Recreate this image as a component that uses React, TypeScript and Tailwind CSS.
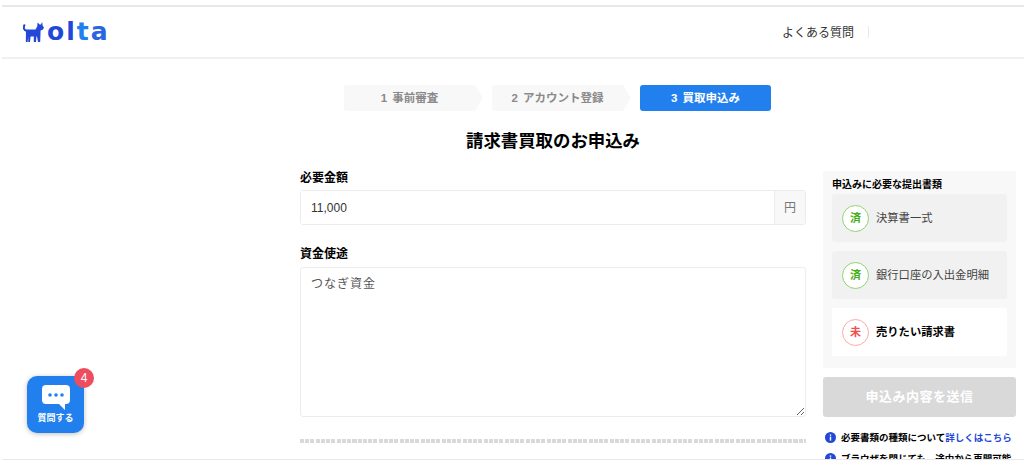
import React from "react";

const FONT = "font-['Liberation_Sans','Noto_Sans_CJK_JP',sans-serif]";
const ARROW =
  "[clip-path:polygon(0_0,calc(100%-8px)_0,100%_50%,calc(100%-8px)_100%,0_100%)]";

const Logo = () => (
  <div className="flex items-end">
    <svg width="21" height="20" viewBox="0 0 21 20" className="block" fill="#2347d6">
      <path d="M1.8 2.5C-.2 5.6 1.2 8.8 4 9" fill="none" stroke="#2347d6" strokeWidth="2" />
      <path d="M3 7.5H12.5L14.2 4.5 14.6 0.5 16.6 2.6H17.8L19.2 0 19.6 3.6 21 5.8 19.6 7.8 17.6 8.6 17.2 20H15L14 14.6H13.4L13 20H10.8V14.4H7.6L7 20H5.2V15L4.6 20H2.8Z" />
    </svg>
    <span className="ml-[3px] font-['DejaVu_Sans',sans-serif] text-[25px] leading-[20px] font-bold tracking-[2px]">
      <span className="text-[#2347d6]">ol</span>
      <span className="text-[#2180ee]">t</span>
      <span className="text-[#2a66e3]">a</span>
    </span>
  </div>
);

const Step = ({ num, label, active }: { num: string; label: string; active?: boolean }) => (
  <div
    className={
      active
        ? "flex h-[26px] w-[131px] items-center justify-center gap-[5px] rounded-[3px] bg-[#2180ee] pt-[1px] text-[11.5px] font-bold text-white"
        : `flex h-[26px] w-[139px] items-center justify-center gap-[5px] rounded-l-[3px] bg-[#f8f8f8] pr-2 pt-[1px] text-[11.5px] font-bold text-[#8a8a8a] ${ARROW}`
    }
  >
    <span>{num}</span>
    <span>{label}</span>
  </div>
);

const DocCard = ({ label, done }: { label: string; done: boolean }) => (
  <div
    className={`flex h-[48px] items-center rounded-[3px] pl-[10px] pt-[1px] ${done ? "bg-[#f1f1f1]" : "bg-white"}`}
  >
    <span
      className={`flex h-[27px] w-[27px] items-center justify-center rounded-full border bg-white text-[11px] font-bold ${
        done ? "border-[#8fd46f] text-[#3fae12]" : "border-[#ffa8a8] text-[#f44d4d]"
      }`}
    >
      {done ? "済" : "未"}
    </span>
    <span className={`ml-[7px] text-[11.3px] ${done ? "text-[#444444]" : "font-bold text-black"}`}>{label}</span>
  </div>
);

const InfoIcon = () => (
  <svg width="11" height="11" viewBox="0 0 11 11" className="shrink-0">
    <circle cx="5.5" cy="5.5" r="5.5" fill="#2347d6" />
    <rect x="4.8" y="4.6" width="1.4" height="4" fill="#fff" />
    <rect x="4.8" y="2.4" width="1.4" height="1.4" fill="#fff" />
  </svg>
);

export default function App() {
  return (
    <div className={`relative h-[463px] w-[1024px] overflow-hidden bg-white pt-[5px] text-black ${FONT}`}>
      <div className="ml-[2px] h-[2px] bg-[#e8e8e8]" />
      <header className="ml-[2px] flex h-[52px] items-center justify-between border-b-2 border-[#f0f0f0] pl-[21px] pr-[155px]">
        <Logo />
        <div className="flex h-[12px] items-center border-r border-[#e8e8e8] pr-[14px]">
          <span className="pt-[1px] text-[12px] text-[#333333]">よくある質問</span>
        </div>
      </header>

      <div className="flex gap-[9px] pl-[344px] pt-[26px]">
        <Step num="1" label="事前審査" />
        <Step num="2" label="アカウント登録" />
        <Step num="3" label="買取申込み" active />
      </div>

      <h1 className="ml-[81px] pl-[1px] pt-[18px] text-center text-[17.4px] leading-[25px] font-bold">請求書買取のお申込み</h1>

      <div className="flex pl-[300px] pt-[17px]">
        <main className="w-[506px]">
          <label className="block text-[12px] leading-[14px] font-bold">必要金額</label>
          <div className="mt-[5px] flex h-[35px] rounded-[3px] border border-[#ececec]">
            <input
              readOnly
              value="11,000"
              className="min-w-0 flex-1 bg-white pl-[10px] text-[12px] text-[#333333] outline-none"
            />
            <span className="flex w-[31px] items-center justify-center border-l border-[#ececec] bg-[#f8f8f8] text-[12px] text-[#777777]">
              円
            </span>
          </div>
          <label className="mt-[22px] block text-[12px] leading-[14px] font-bold">資金使途</label>
          <textarea
            readOnly
            value="つなぎ資金"
            className="mt-[6px] block h-[150px] w-full rounded-[3px] border border-[#ececec] px-[10px] py-[7px] text-[12px] tracking-[1px] text-[#555555] outline-none"
          />
          <div className="mt-[22px] h-[4px] bg-[repeating-linear-gradient(90deg,#d9d9d9_0,#d9d9d9_4px,transparent_4px,transparent_5.25px)]" />
        </main>

        <aside className="ml-[17px] w-[193px]">
          <div className="bg-[#f8f8f8] px-[9px] pb-[12px] pt-[7px]">
            <p className="text-[10px] leading-[13px] font-bold">申込みに必要な提出書類</p>
            <div className="mt-[3px] flex flex-col gap-[9px]">
              <DocCard label="決算書一式" done />
              <DocCard label="銀行口座の入出金明細" done />
              <DocCard label="売りたい請求書" done={false} />
            </div>
          </div>
          <button
            type="button"
            className="mt-[9px] h-[40px] w-full rounded-[3px] bg-[#d9d9d9] text-[13px] font-bold tracking-[0.5px] text-white"
          >
            申込み内容を送信
          </button>
          <div className="mt-[14px] flex items-center gap-[5px] pl-[2px] text-[9.5px] leading-[13px] font-bold whitespace-nowrap">
            <InfoIcon />
            <span>
              必要書類の種類について<span className="text-[#2347d6]">詳しくはこちら</span>
            </span>
          </div>
          <div className="mt-[8px] flex items-center gap-[5px] pl-[2px] text-[9.5px] leading-[13px] font-bold whitespace-nowrap">
            <InfoIcon />
            <span>ブラウザを閉じても、途中から再開可能</span>
          </div>
        </aside>
      </div>

      <div className="absolute bottom-[3px] left-[2px] right-0 h-px bg-[#e8e8e8]" />
      <div className="absolute bottom-0 left-0 right-0 h-[3px] bg-white" />

      <div className="absolute left-[27px] top-[376px] flex h-[57px] w-[57px] flex-col items-center rounded-[10px] bg-[#2180ee] pt-[9px] shadow-[0_1px_5px_rgba(0,0,0,0.25)]">
        <svg width="30" height="26" viewBox="0 0 30 26">
          <path d="M5 0h20a4 4 0 0 1 4 4v11a4 4 0 0 1-4 4h-1v6l-6-6H5a4 4 0 0 1-4-4V4a4 4 0 0 1 4-4z" fill="#fff" />
          <circle cx="9" cy="10" r="1.8" fill="#2180ee" />
          <circle cx="15" cy="10" r="1.8" fill="#2180ee" />
          <circle cx="21" cy="10" r="1.8" fill="#2180ee" />
        </svg>
        <span className="mt-[1px] text-[9px] leading-[12px] font-bold text-white">質問する</span>
        <span className="absolute -right-[10px] -top-[8px] flex h-[20px] w-[20px] items-center justify-center rounded-full bg-[#ee4d5f] text-[12px] font-medium text-white">
          4
        </span>
      </div>
    </div>
  );
}
